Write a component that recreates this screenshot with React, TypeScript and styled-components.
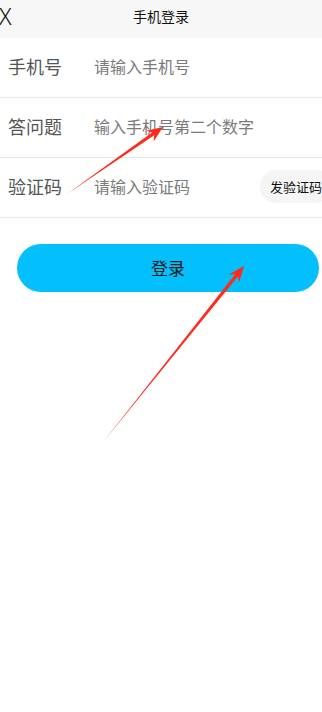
import React from "react";
import styled, { createGlobalStyle } from "styled-components";

const Global = createGlobalStyle`
  html, body { margin: 0; padding: 0; background: #fff; }
  body { font-family: "Noto Sans CJK SC", "Noto Sans", sans-serif; }
  * { box-sizing: border-box; }
`;

const Page = styled.div`
  position: relative;
  width: 322px;
  height: 712px;
  overflow: hidden;
  background: #fff;
`;

const Header = styled.div`
  height: 38px;
  background: #f7f7f7;
  display: flex;
  align-items: center;
  justify-content: center;
  position: relative;
`;

const Close = styled.span`
  position: absolute;
  left: -1px;
  top: 3px;
  font-family: "Noto Sans", sans-serif;
  font-size: 23px;
  font-weight: 300;
  color: #111;
  line-height: 26px;
`;

const Title = styled.span`
  font-size: 14px;
  color: #111;
  margin-top: -6px;
`;

const Row = styled.div`
  height: 60px;
  display: flex;
  align-items: center;
  border-bottom: 1px solid #e6e6e6;
  padding: 0 0 3px 8px;
  overflow: hidden;
`;

const Label = styled.span`
  flex: 0 0 86px;
  font-size: 18px;
  color: #555;
`;

const Placeholder = styled.span`
  flex: 0 0 166px;
  font-size: 16px;
  color: #7a7a7a;
  white-space: nowrap;
`;

const CodeBtn = styled.span`
  flex-shrink: 0;
  height: 33px;
  padding: 0 10px;
  border-radius: 16px;
  background: #f5f5f5;
  display: flex;
  align-items: center;
  font-size: 13px;
  color: #111;
  white-space: nowrap;
`;

const Wrap = styled.div`
  padding: 26px 3px 0 17px;
`;

const LoginBtn = styled.div`
  height: 48px;
  border-radius: 24px;
  background: #03c0fc;
  display: flex;
  align-items: center;
  justify-content: center;
  font-size: 17px;
  color: #1a1a1a;
  padding-bottom: 2px;
`;

const Overlay = styled.svg`
  position: absolute;
  left: 0;
  top: 0;
  pointer-events: none;
`;

function arrowPoints(tx: number, ty: number, px: number, py: number) {
  const dx = px - tx;
  const dy = py - ty;
  const len = Math.hypot(dx, dy);
  const ux = dx / len;
  const uy = dy / len;
  const nx = -uy;
  const ny = ux;
  const headLen = 16;
  const headW = 6.5;
  const shaftW = 1.8;
  const bx = px - ux * headLen;
  const by = py - uy * headLen;
  const nbx = px - ux * (headLen - 4);
  const nby = py - uy * (headLen - 4);
  const pts = [
    [tx, ty],
    [nbx + nx * shaftW, nby + ny * shaftW],
    [bx + nx * headW, by + ny * headW],
    [px, py],
    [bx - nx * headW, by - ny * headW],
    [nbx - nx * shaftW, nby - ny * shaftW],
  ];
  return pts.map((p) => `${p[0].toFixed(1)},${p[1].toFixed(1)}`).join(" ");
}

const rows = [
  { label: "手机号", ph: "请输入手机号" },
  { label: "答问题", ph: "输入手机号第二个数字" },
  { label: "验证码", ph: "请输入验证码", code: true },
];

export default function App() {
  return (
    <Page>
      <Global />
      <Header>
        <Close>X</Close>
        <Title>手机登录</Title>
      </Header>
      {rows.map((r) => (
        <Row key={r.label}>
          <Label>{r.label}</Label>
          <Placeholder>{r.ph}</Placeholder>
          {r.code && <CodeBtn>发验证码</CodeBtn>}
        </Row>
      ))}
      <Wrap>
        <LoginBtn>登录</LoginBtn>
      </Wrap>
      <Overlay width="322" height="712" viewBox="0 0 322 712">
        <polygon points={arrowPoints(67, 194, 163, 127)} fill="#ff2a1a" />
        <polygon points={arrowPoints(104, 441, 244, 266)} fill="#ff2a1a" />
      </Overlay>
    </Page>
  );
}
